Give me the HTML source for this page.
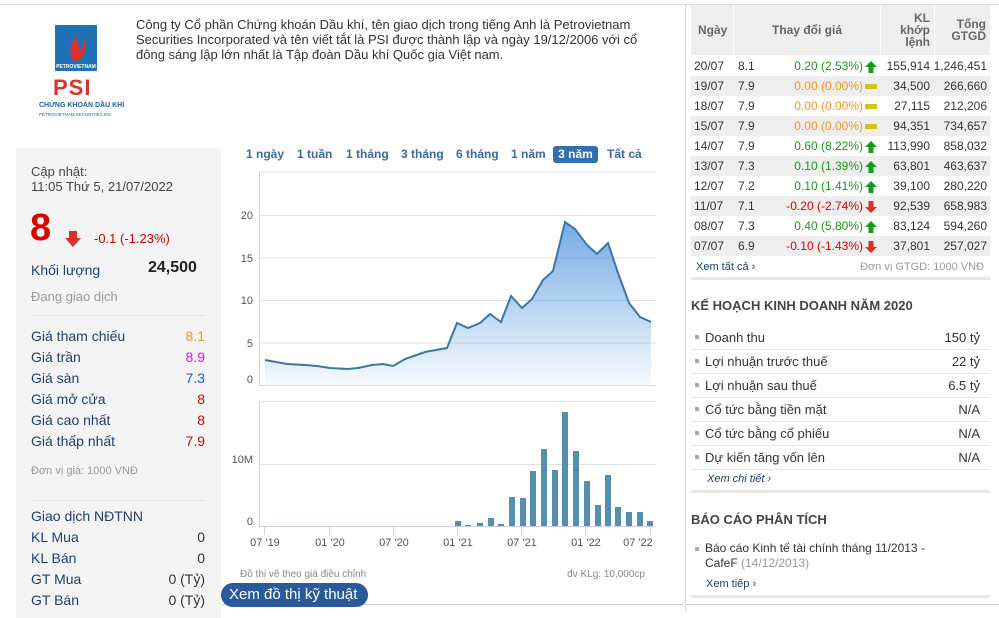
<!DOCTYPE html>
<html><head><meta charset="utf-8"><style>
*{margin:0;padding:0;box-sizing:border-box}
body{width:999px;height:611px;overflow:hidden;background:#fff;font-family:"Liberation Sans",Arial,sans-serif;position:relative;color:#333}
.a{position:absolute;white-space:nowrap}
.lp{position:absolute;left:16px;top:148px;width:205px;height:470px;background:#f4f4f4}
.lbl{color:#1f3f6e;font-size:14px}
.r{text-align:right}
</style></head><body>
<div class="a" style="left:0;top:4px;width:999px;height:1px;background:#ddd"></div>
<!-- logo -->
<div class="a" style="left:55px;top:25px;width:42px;height:46px;background:#1f72b6"></div>
<svg class="a" style="left:55px;top:25px" width="42" height="46"><path d="M21 37 C12 30 15 20 22 10 C20 18 26 20 24 28 C27 24 30 18 28 12 C34 22 30 32 21 37Z" fill="#e0302a"/><rect x="3" y="37" width="36" height="6" fill="#1f72b6"/><text x="21" y="43" font-size="5" fill="#fff" text-anchor="middle" font-family="Liberation Sans" font-weight="bold">PETROVIETNAM</text></svg>
<div class="a" style="left:53px;top:75px;font-size:22px;font-weight:bold;color:#e0302a;letter-spacing:1px">PSI</div>
<div class="a" style="left:39px;top:102px;font-size:7px;font-weight:bold;color:#1f5ea6">CHỨNG KHOÁN DẦU KHÍ</div>
<div class="a" style="left:39px;top:112px;font-size:4.5px;color:#1f5ea6">PETROVIETNAM SECURITIES INC</div>
<div class="a" style="left:136px;top:17px;font-size:13px;line-height:15px;color:#333;white-space:normal;width:520px">Công ty Cổ phần Chứng khoán Dầu khí, tên giao dịch trong tiếng Anh là Petrovietnam Securities Incorporated và tên viết tắt là PSI được thành lập và ngày 19/12/2006 với cổ đông sáng lập lớn nhất là Tập đoàn Dầu khí Quốc gia Việt nam.</div>

<!-- left panel -->
<div class="lp"></div>
<div class="a" style="left:31px;top:164px;font-size:13px;line-height:15px;color:#444">Cập nhật:<br>11:05 Thứ 5, 21/07/2022</div>
<div class="a" style="left:30px;top:207px;font-size:38px;font-weight:bold;color:#d00">8</div>
<svg class="a" style="left:65px;top:231px" width="16" height="17"><path d="M4 0h8v7h4l-8 9-8-9h4z" fill="#d9302a"/></svg>
<div class="a" style="left:94px;top:231px;font-size:13px;color:#c00">-0.1 (-1.23%)</div>
<div class="a lbl" style="left:31px;top:262px;font-size:14px">Khối lượng</div>
<div class="a" style="left:148px;top:259px;font-size:16px;font-weight:bold;color:#222">24,500</div>
<div class="a" style="left:31px;top:289px;font-size:13px;color:#999">Đang giao dịch</div>
<div class="a" style="left:31px;top:315px;width:175px;height:1px;background:#e4e4e4"></div>
<div class="a lbl" style="left:31px;top:328px">Giá tham chiếu</div><div class="a r" style="left:150px;width:55px;top:328px;font-size:14px;color:#f7941d">8.1</div>
<div class="a lbl" style="left:31px;top:349px">Giá trần</div><div class="a r" style="left:150px;width:55px;top:349px;font-size:14px;color:#f0f">8.9</div>
<div class="a lbl" style="left:31px;top:370px">Giá sàn</div><div class="a r" style="left:150px;width:55px;top:370px;font-size:14px;color:#1f5ea6">7.3</div>
<div class="a lbl" style="left:31px;top:391px">Giá mở cửa</div><div class="a r" style="left:150px;width:55px;top:391px;font-size:14px;color:#d00">8</div>
<div class="a lbl" style="left:31px;top:412px">Giá cao nhất</div><div class="a r" style="left:150px;width:55px;top:412px;font-size:14px;color:#d00">8</div>
<div class="a lbl" style="left:31px;top:433px">Giá thấp nhất</div><div class="a r" style="left:150px;width:55px;top:433px;font-size:14px;color:#d00">7.9</div>
<div class="a" style="left:31px;top:465px;font-size:11px;color:#999">Đơn vị giá: 1000 VNĐ</div>
<div class="a" style="left:31px;top:500px;width:175px;height:1px;background:#e4e4e4"></div>
<div class="a lbl" style="left:31px;top:508px">Giao dịch NĐTNN</div>
<div class="a lbl" style="left:31px;top:529px">KL Mua</div><div class="a r" style="left:150px;width:55px;top:529px;font-size:14px;color:#333">0</div>
<div class="a lbl" style="left:31px;top:550px">KL Bán</div><div class="a r" style="left:150px;width:55px;top:550px;font-size:14px;color:#333">0</div>
<div class="a lbl" style="left:31px;top:571px">GT Mua</div><div class="a r" style="left:140px;width:65px;top:571px;font-size:14px;color:#333">0 (Tỷ)</div>
<div class="a lbl" style="left:31px;top:592px">GT Bán</div><div class="a r" style="left:140px;width:65px;top:592px;font-size:14px;color:#333">0 (Tỷ)</div>

<!-- range tabs -->
<div class="a" style="left:246px;top:147px;font-size:12px;font-weight:bold;color:#3a6a9e">1 ngày</div>
<div class="a" style="left:297px;top:147px;font-size:12px;font-weight:bold;color:#3a6a9e">1 tuần</div>
<div class="a" style="left:346px;top:147px;font-size:12px;font-weight:bold;color:#3a6a9e">1 tháng</div>
<div class="a" style="left:401px;top:147px;font-size:12px;font-weight:bold;color:#3a6a9e">3 tháng</div>
<div class="a" style="left:456px;top:147px;font-size:12px;font-weight:bold;color:#3a6a9e">6 tháng</div>
<div class="a" style="left:511px;top:147px;font-size:12px;font-weight:bold;color:#3a6a9e">1 năm</div>
<div class="a" style="left:553px;top:146px;width:45px;height:17px;border-radius:3px;background:#2f6eb0;color:#fff;font-size:12px;font-weight:bold;text-align:center;line-height:17px">3 năm</div>
<div class="a" style="left:607px;top:147px;font-size:12px;font-weight:bold;color:#3a6a9e">Tất cả</div>

<svg class="a" style="left:225px;top:165px" width="440" height="440">
<defs><linearGradient id="g" x1="0" y1="0" x2="0" y2="1"><stop offset="0" stop-color="#5b9de0" stop-opacity=".85"/><stop offset="1" stop-color="#5b9de0" stop-opacity=".05"/></linearGradient></defs>
<g transform="translate(-225,-165)" font-family="Liberation Sans" font-size="11" fill="#555">
<line x1="259.5" y1="172" x2="259.5" y2="385" stroke="#c8d4e6"/>
<line x1="259" y1="172" x2="656" y2="172" stroke="#dde"/>
<g stroke="#e0e0e0"><line x1="259" y1="215.5" x2="656" y2="215.5"/><line x1="259" y1="258" x2="656" y2="258"/><line x1="259" y1="300.5" x2="656" y2="300.5"/><line x1="259" y1="343" x2="656" y2="343"/><line x1="259" y1="385.5" x2="656" y2="385.5" stroke="#d0d8e4"/></g>
<text x="253" y="219" text-anchor="end">20</text><text x="253" y="262" text-anchor="end">15</text><text x="253" y="304" text-anchor="end">10</text><text x="253" y="347" text-anchor="end">5</text><text x="253" y="383" text-anchor="end">0</text>
<path d="M265 360 L287 364 L305 365 L317 366 L330 368 L348 369 L358 368 L372 365 L383 364 L393 366 L405 359 L425 352 L447 348 L457 323 L468 328 L480 323 L490 314 L501 322 L511 296 L522 308 L532 299 L543 280 L553 271 L565 222 L575 229 L587 245 L597 254 L608 243 L618 273 L629 303 L640 317 L651 322 L651 385 L265 385Z" fill="url(#g)"/>
<path d="M265 360 L287 364 L305 365 L317 366 L330 368 L348 369 L358 368 L372 365 L383 364 L393 366 L405 359 L425 352 L447 348 L457 323 L468 328 L480 323 L490 314 L501 322 L511 296 L522 308 L532 299 L543 280 L553 271 L565 222 L575 229 L587 245 L597 254 L608 243 L618 273 L629 303 L640 317 L651 322" fill="none" stroke="#3a77a8" stroke-width="2"/>
<line x1="259.5" y1="401" x2="259.5" y2="526" stroke="#c8d4e6"/>
<line x1="259" y1="401.5" x2="656" y2="401.5" stroke="#dde"/>
<line x1="259" y1="464.5" x2="656" y2="464.5" stroke="#e0e0e0"/>
<line x1="259" y1="526.5" x2="656" y2="526.5" stroke="#c8d4e6"/>
<text x="253" y="463" text-anchor="end">10M</text><text x="253" y="525" text-anchor="end">0</text>
<g fill="#548fae">
<rect x="455" y="521" width="6" height="5"/><rect x="465" y="525" width="6" height="1"/><rect x="477" y="523" width="6" height="3"/><rect x="488" y="518" width="6" height="8"/><rect x="498" y="524" width="6" height="2"/><rect x="509" y="497" width="6" height="29"/><rect x="520" y="498" width="6" height="28"/><rect x="530" y="471" width="6" height="55"/><rect x="541" y="449" width="6" height="77"/><rect x="552" y="470" width="6" height="56"/><rect x="562" y="412" width="6" height="114"/><rect x="573" y="451" width="6" height="75"/><rect x="584" y="481" width="6" height="45"/><rect x="595" y="505" width="6" height="21"/><rect x="605" y="475" width="6" height="51"/><rect x="615" y="507" width="6" height="19"/><rect x="626" y="512" width="6" height="14"/><rect x="637" y="512" width="6" height="14"/><rect x="647" y="521" width="6" height="5"/>
</g>
<g stroke="#c8d4e6"><line x1="264.5" y1="527" x2="264.5" y2="535"/><line x1="329.5" y1="527" x2="329.5" y2="535"/><line x1="393.5" y1="527" x2="393.5" y2="535"/><line x1="457.5" y1="527" x2="457.5" y2="535"/><line x1="521.5" y1="527" x2="521.5" y2="535"/><line x1="585.5" y1="527" x2="585.5" y2="535"/><line x1="650.5" y1="527" x2="650.5" y2="535"/></g>
<g text-anchor="middle" font-size="11"><text x="265" y="546">07 '19</text><text x="330" y="546">01 '20</text><text x="394" y="546">07 '20</text><text x="458" y="546">01 '21</text><text x="522" y="546">07 '21</text><text x="586" y="546">01 '22</text><text x="638" y="546">07 '22</text></g>
<text x="240" y="577" font-size="10" fill="#888">Đồ thị vẽ theo giá điều chỉnh</text>
<text x="645" y="577" font-size="10" fill="#888" text-anchor="end">đv KLg: 10,000cp</text>
</g></svg>
<div class="a" style="left:222px;top:604px;width:461px;height:1px;background:#ccc"></div>
<div class="a" style="left:221px;top:583px;width:147px;height:24px;border-radius:12px;background:#2a5a9a;color:#fff;font-size:15px;line-height:23px;padding-left:8px">Xem đồ thị kỹ thuật</div>

<!-- right -->
<div class="a" style="left:685px;top:5px;height:606px;border-left:1px dotted #bbb"></div>
<style>
.hd{position:absolute;top:5px;height:50px;background:#eee;color:#666;font-weight:bold;font-size:12px;display:flex;align-items:center;line-height:12px}
.row{height:20px;font-size:12px;display:flex;align-items:center;white-space:nowrap}.row:nth-child(even){background:#eee}
.c1{width:42px;padding-left:3px}.c2{width:35px;padding-left:5px}.c3{width:109px;text-align:right}.c4{width:55px;text-align:right;padding-right:2px}.c5{width:58px;text-align:right;padding-right:3px}
.up{color:#1a9a1a}.eq{color:#f7941d}.dn{color:#d00}.ic{display:inline-block;width:12px;height:12px;vertical-align:middle;margin-left:2px}
</style>
<div class="hd" style="left:691px;width:42px;padding-left:7px">Ngày</div>
<div class="hd" style="left:734px;width:146px;justify-content:center">Thay đổi giá</div>
<div class="hd" style="left:881px;width:53px;justify-content:flex-end;text-align:right;padding-right:4px">KL<br>khớp<br>lệnh</div>
<div class="hd" style="left:935px;width:55px;justify-content:flex-end;text-align:right;padding-right:4px">Tổng<br>GTGD</div>
<div class="a" style="left:691px;top:56px;width:299px">
<div class="row"><span class="c1">20/07</span><span class="c2">8.1</span><span class="c3 up">0.20 (2.53%)<svg class="ic" viewBox="0 0 12 12"><path d="M6 0l6 6H8.5v6h-5V6H0z" fill="#1a9a1a"/></svg></span><span class="c4">155,914</span><span class="c5">1,246,451</span></div>
<div class="row"><span class="c1">19/07</span><span class="c2">7.9</span><span class="c3 eq">0.00 (0.00%)<svg class="ic" viewBox="0 0 12 12"><rect x="0" y="3" width="12" height="5" fill="#d6c21a"/></svg></span><span class="c4">34,500</span><span class="c5">266,660</span></div>
<div class="row"><span class="c1">18/07</span><span class="c2">7.9</span><span class="c3 eq">0.00 (0.00%)<svg class="ic" viewBox="0 0 12 12"><rect x="0" y="3" width="12" height="5" fill="#d6c21a"/></svg></span><span class="c4">27,115</span><span class="c5">212,206</span></div>
<div class="row"><span class="c1">15/07</span><span class="c2">7.9</span><span class="c3 eq">0.00 (0.00%)<svg class="ic" viewBox="0 0 12 12"><rect x="0" y="3" width="12" height="5" fill="#d6c21a"/></svg></span><span class="c4">94,351</span><span class="c5">734,657</span></div>
<div class="row"><span class="c1">14/07</span><span class="c2">7.9</span><span class="c3 up">0.60 (8.22%)<svg class="ic" viewBox="0 0 12 12"><path d="M6 0l6 6H8.5v6h-5V6H0z" fill="#1a9a1a"/></svg></span><span class="c4">113,990</span><span class="c5">858,032</span></div>
<div class="row"><span class="c1">13/07</span><span class="c2">7.3</span><span class="c3 up">0.10 (1.39%)<svg class="ic" viewBox="0 0 12 12"><path d="M6 0l6 6H8.5v6h-5V6H0z" fill="#1a9a1a"/></svg></span><span class="c4">63,801</span><span class="c5">463,637</span></div>
<div class="row"><span class="c1">12/07</span><span class="c2">7.2</span><span class="c3 up">0.10 (1.41%)<svg class="ic" viewBox="0 0 12 12"><path d="M6 0l6 6H8.5v6h-5V6H0z" fill="#1a9a1a"/></svg></span><span class="c4">39,100</span><span class="c5">280,220</span></div>
<div class="row"><span class="c1">11/07</span><span class="c2">7.1</span><span class="c3 dn">-0.20 (-2.74%)<svg class="ic" viewBox="0 0 12 12"><path d="M3.5 0h5v6H12l-6 6-6-6h3.5z" fill="#d9302a"/></svg></span><span class="c4">92,539</span><span class="c5">658,983</span></div>
<div class="row"><span class="c1">08/07</span><span class="c2">7.3</span><span class="c3 up">0.40 (5.80%)<svg class="ic" viewBox="0 0 12 12"><path d="M6 0l6 6H8.5v6h-5V6H0z" fill="#1a9a1a"/></svg></span><span class="c4">83,124</span><span class="c5">594,260</span></div>
<div class="row"><span class="c1">07/07</span><span class="c2">6.9</span><span class="c3 dn">-0.10 (-1.43%)<svg class="ic" viewBox="0 0 12 12"><path d="M3.5 0h5v6H12l-6 6-6-6h3.5z" fill="#d9302a"/></svg></span><span class="c4">37,801</span><span class="c5">257,027</span></div>
</div>
<div class="a" style="left:696px;top:261px;font-size:11px;color:#1f3f6e">Xem tất cả ›</div>
<div class="a" style="left:860px;top:261px;font-size:11px;color:#999">Đơn vị GTGD: 1000 VNĐ</div>
<div class="a" style="left:691px;top:277px;width:299px;height:3px;background:#e6e6e6"></div>

<div class="a" style="left:691px;top:298px;font-size:13px;font-weight:bold;color:#444">KẾ HOẠCH KINH DOANH NĂM 2020</div>
<style>.kl{position:absolute;left:691px;width:299px;height:24px;border-bottom:1px solid #e6e6e6;font-size:13px;color:#333}.kl b{position:absolute;left:4px;top:9px;width:4px;height:4px;background:#aaa}.kl span{position:absolute;left:14px;top:4px}.kl i{position:absolute;right:10px;top:4px;font-style:normal}</style>
<div class="kl" style="top:326px"><b></b><span>Doanh thu</span><i>150 tỷ</i></div>
<div class="kl" style="top:350px"><b></b><span>Lợi nhuận trước thuế</span><i>22 tỷ</i></div>
<div class="kl" style="top:374px"><b></b><span>Lợi nhuận sau thuế</span><i>6.5 tỷ</i></div>
<div class="kl" style="top:398px"><b></b><span>Cổ tức bằng tiền mặt</span><i>N/A</i></div>
<div class="kl" style="top:422px"><b></b><span>Cổ tức bằng cổ phiếu</span><i>N/A</i></div>
<div class="kl" style="top:446px"><b></b><span>Dự kiến tăng vốn lên</span><i>N/A</i></div>
<div class="a" style="left:707px;top:473px;font-size:11px;font-style:italic;color:#1f3f6e">Xem chi tiết ›</div>
<div class="a" style="left:691px;top:490px;width:299px;height:3px;background:#e6e6e6"></div>
<div class="a" style="left:691px;top:512px;font-size:13px;font-weight:bold;color:#444">BÁO CÁO PHÂN TÍCH</div>
<div class="a" style="left:695px;top:547px;width:4px;height:4px;background:#aaa"></div>
<div class="a" style="left:705px;top:541px;font-size:12px;line-height:15px;color:#333">Báo cáo Kinh tế tài chính tháng 11/2013 -<br>CafeF <span style="color:#999">(14/12/2013)</span></div>
<div class="a" style="left:706px;top:578px;font-size:11px;color:#1f3f6e">Xem tiếp ›</div>
<div class="a" style="left:691px;top:595px;width:299px;height:3px;background:#e6e6e6"></div>
<div class="a" style="left:685px;top:604px;width:314px;height:1px;background:#ccc"></div>
</body></html>
